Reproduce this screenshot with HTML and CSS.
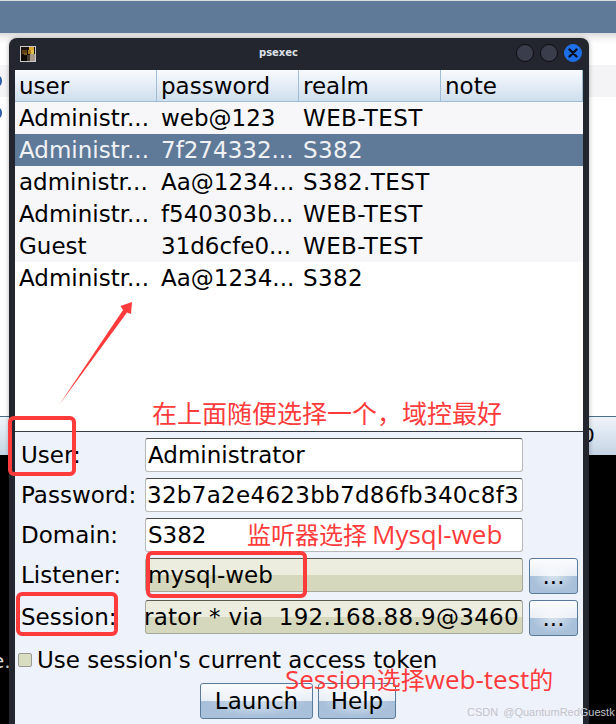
FILE: index.html
```html
<!DOCTYPE html>
<html lang="en">
<head>
<meta charset="utf-8">
<title>psexec</title>
<link rel="stylesheet" href="styles.css">
</head>
<body>
<div class="desktop">
  <div class="top-bar"></div>
  <div class="bg-row bg-row-left"></div>
  <div class="bg-row bg-row-right"></div>
  <div class="bg-dot bg-dot-1"></div>
  <div class="bg-dot bg-dot-2"></div>
  <div class="bg-head bg-head-left"></div>
  <div class="bg-head bg-head-right"><span>0</span></div>
  <div class="bg-black bg-black-left"><span class="bg-frag">e.</span></div>
  <div class="bg-black bg-black-right"></div>

  <section class="window">
    <header class="titlebar">
      <svg class="app-icon" width="16" height="16" viewBox="0 0 16 16">
        <rect width="16" height="16" fill="#1c140a"/>
        <rect x="2" y="4" width="5" height="4" fill="#5c3f12"/>
        <rect x="4" y="7" width="3" height="3" fill="#7a5a1c"/>
        <rect x="1" y="9" width="6" height="6" fill="#0e0904"/>
        <rect x="9" y="1" width="5" height="3" fill="#d8a82a"/>
        <rect x="8" y="4" width="3" height="4" fill="#a87a20"/>
        <rect x="11" y="4" width="3" height="4" fill="#e0c050"/>
        <rect x="10" y="8" width="5" height="7" fill="#a89a88"/>
        <rect x="7" y="9" width="3" height="6" fill="#4a3c30"/>
        <rect x="0.5" y="0.5" width="15" height="15" fill="none" stroke="#c9c9c9"/>
      </svg>
      <span class="title">psexec</span>
      <div class="win-buttons">
        <span class="win-btn"></span>
        <span class="win-btn"></span>
        <span class="win-btn win-close">
          <svg width="10" height="10" viewBox="0 0 10 10"><path d="M1.5 1.5l7 7M8.5 1.5l-7 7" stroke="#08101c" stroke-width="2.4" stroke-linecap="round"/></svg>
        </span>
      </div>
    </header>

    <div class="table">
      <div class="t-row t-head">
        <div class="cell">user</div><div class="cell">password</div><div class="cell">realm</div><div class="cell">note</div>
      </div>
      <div class="t-row"><div class="cell">Administr...</div><div class="cell">web@123</div><div class="cell">WEB-TEST</div><div class="cell"></div></div>
      <div class="t-row t-selected"><div class="cell">Administr...</div><div class="cell">7f274332...</div><div class="cell">S382</div><div class="cell"></div></div>
      <div class="t-row"><div class="cell">administr...</div><div class="cell">Aa@1234...</div><div class="cell">S382.TEST</div><div class="cell"></div></div>
      <div class="t-row"><div class="cell">Administr...</div><div class="cell">f540303b...</div><div class="cell">WEB-TEST</div><div class="cell"></div></div>
      <div class="t-row"><div class="cell">Guest</div><div class="cell">31d6cfe0...</div><div class="cell">WEB-TEST</div><div class="cell"></div></div>
      <div class="t-row t-white"><div class="cell">Administr...</div><div class="cell">Aa@1234...</div><div class="cell">S382</div><div class="cell"></div></div>
    </div>

    <div class="form">
      <div class="f-row">
        <label class="f-label">User:</label>
        <div class="field"><span>Administrator</span></div>
      </div>
      <div class="f-row">
        <label class="f-label">Password:</label>
        <div class="field field-end"><span>32b7a2e4623bb7d86fb340c8f3</span></div>
      </div>
      <div class="f-row">
        <label class="f-label">Domain:</label>
        <div class="field"><span>S382</span></div>
      </div>
      <div class="f-row f-row-tall">
        <label class="f-label">Listener:</label>
        <div class="field field-ro"><span>mysql-web</span></div>
        <button class="btn btn-more">...</button>
      </div>
      <div class="f-row">
        <label class="f-label">Session:</label>
        <div class="field field-ro field-end"><span>Administrator * via  192.168.88.9@3460</span></div>
        <button class="btn btn-more">...</button>
      </div>
      <div class="check-row">
        <span class="check"></span>
        <span>Use session's current access token</span>
      </div>
      <div class="actions">
        <button class="btn btn-launch">Launch</button>
        <button class="btn btn-help">Help</button>
      </div>
    </div>
  </section>

  <svg class="arrow" width="80" height="112" viewBox="0 0 80 112">
    <path d="M0 109L64 14L61.5 10L73 6L72 18L68 16.5Z" fill="#ff3b3b"/>
  </svg>
  <div class="mark mark-user"></div>
  <div class="mark mark-listener"></div>
  <div class="mark mark-session"></div>
  <div class="note note-1">在上面随便选择一个，域控最好</div>
  <div class="note note-2">监听器选择<span class="latin latin-gap">Mysql-web</span></div>
  <div class="note note-3"><span class="latin">Session</span>选择<span class="latin">web-test</span>的</div>
  <div class="watermark">CSDN @QuantumRedGuestk</div>
</div>
</body>
</html>
```

FILE: styles.css
```css
* { box-sizing: border-box; }
html, body { margin: 0; padding: 0; }
body { width: 616px; height: 724px; overflow: hidden; background: #fff; font-family: "DejaVu Sans", sans-serif; }

.desktop { position: relative; width: 616px; height: 724px; overflow: hidden; background: linear-gradient(#dcdcdc 33px, #f2f2f2 38px, #fff 44px); }
.top-bar { position: absolute; left: 0; top: 1px; width: 616px; height: 32px; background: #5f7a98; }
.bg-row { position: absolute; top: 65px; height: 32px; background: #f4f4f6; }
.bg-row-left { left: 0; width: 9px; }
.bg-row-right { left: 589px; width: 27px; }
.bg-dot { position: absolute; left: -4px; width: 6px; height: 10px; border-radius: 50%; background: #2f5fa8; }
.bg-dot-1 { top: 76px; }
.bg-dot-2 { top: 108px; }
.bg-head { position: absolute; top: 416px; height: 39px; background: linear-gradient(#f0f4fa, #c4d4e4); border-top: 1px solid #4a6c88; }
.bg-head-left { left: 0; width: 9px; }
.bg-head-right { left: 589px; width: 27px; font-size: 20px; line-height: 37px; color: #000; overflow: hidden; text-indent: -7px; }
.bg-black { position: absolute; top: 455px; height: 269px; background: #000; }
.bg-black-left { left: 0; width: 9px; overflow: hidden; }
.bg-black-right { left: 589px; width: 27px; }
.bg-frag { position: absolute; left: -8px; top: 194px; color: #ddd; font-size: 20px; }

.window { position: absolute; left: 9px; top: 38px; width: 580px; height: 686px; display: flex; flex-direction: column; background: #23262f; border-radius: 8px 8px 0 0; padding: 0 6px; box-shadow: 0 0 5px rgba(0,0,0,.3); }
.titlebar { position: relative; flex: none; height: 32px; margin: 0 -6px; display: flex; align-items: center; padding: 0 7px 0 11px; }
.app-icon { flex: none; margin-top: -1px; }
.title { position: absolute; left: 0; right: 41px; top: 8px; text-align: center; color: #dfe2e8; font-size: 10px; font-weight: 700; line-height: 14px; }
.win-buttons { margin-left: auto; display: flex; gap: 6px; margin-top: -2px; }
.win-btn { width: 18px; height: 18px; border-radius: 50%; background: #3a3e4c; border: 1px solid #0c0e12; display: flex; align-items: center; justify-content: center; }
.win-close { background: #1f6fe8; border-color: #1f6fe8; }

.table { flex: none; height: 361px; background: #fff; font-size: 23px; color: #000; }
.t-row { display: grid; grid-template-columns: repeat(4, 142px); height: 32px; background: #f7f7fa; line-height: 32px; }
.t-row .cell:nth-child(3) { letter-spacing: .4px; }
.t-white { background: #fff; }
.t-head { height: 32px; background: linear-gradient(#f8fbff, #cfdeed); border-bottom: 1px solid #a0bdd8; line-height: 33px; }
.t-head .cell { border-right: 1px solid #a0bdd8; padding-left: 4px; }
.t-head .cell:nth-child(3) { letter-spacing: 0; }
.t-selected { background: #5f7a98; color: #f0f2f6; }
.cell { padding-left: 4px; white-space: nowrap; overflow: hidden; }

.form { flex: 1; background: #eef2fb; border-top: 1px solid #3a3e48; padding-top: 6px; font-size: 23px; color: #000; }
.f-row { display: flex; align-items: flex-start; height: 40px; padding-left: 6px; }
.f-row-tall { height: 42px; }
.f-label { flex: none; width: 124px; line-height: 34px; }
.field { flex: none; width: 378px; height: 34px; display: flex; overflow: hidden; background: #fff; border: 1px solid #b8b8b8; border-top-color: #4a4a4a; border-radius: 3px; padding: 0 2px; line-height: 32px; white-space: pre; }
.field-end { justify-content: flex-end; padding: 0 3px 0 0; letter-spacing: .3px; }
.field-ro { background: linear-gradient(#ecedde 0 50%, #d5d8bc 50% 100%); border-color: #a8a898; border-top-color: #5a5a50; }
.btn { font-family: inherit; font-size: 23px; color: #000; border: 1px solid #5a7a9c; border-radius: 3px; background: radial-gradient(ellipse at center, rgba(255,255,255,.55), rgba(255,255,255,0) 65%), linear-gradient(#fbfcfe, #e8eef6 50%, #a8c0da 50%, #a8c0da); padding: 0; cursor: default; }
.btn-more { flex: none; width: 49px; height: 36px; margin-left: 6px; line-height: 30px; }
.check-row { display: flex; align-items: center; height: 34px; padding-left: 3px; margin-top: 3px; }
.check { flex: none; width: 14px; height: 14px; margin-right: 5px; background: #d8dcc0; border: 1px solid #9a9a90; border-radius: 2px; }
.actions { display: flex; justify-content: center; gap: 5px; margin-top: 6px; margin-left: -2px; }
.btn-launch { width: 113px; height: 36px; }
.btn-help { width: 78px; height: 36px; }

.arrow { position: absolute; left: 59px; top: 296px; }
.mark { position: absolute; border: 4px solid #ff3b3b; border-radius: 6px; }
.mark-user { left: 8px; top: 416px; width: 68px; height: 60px; }
.mark-listener { left: 146px; top: 551px; width: 161px; height: 47px; }
.mark-session { left: 16px; top: 592px; width: 102px; height: 44px; }
.note { position: absolute; color: #ff3b3b; font-family: "Open Sans", "Noto Sans CJK SC", sans-serif; font-size: 24px; line-height: 30px; white-space: nowrap; }
.latin { font-size: 26px; }
.latin-gap { margin-left: 5px; }
.note-1 { left: 152px; top: 398px; font-size: 25px; }
.note-2 { left: 247px; top: 519px; }
.note-3 { left: 285px; top: 664px; }
.watermark { position: absolute; left: 467px; top: 705px; font-family: "Liberation Sans", sans-serif; font-size: 11px; word-spacing: 2px; line-height: 14px; color: #c4c4ca; white-space: nowrap; }
```
